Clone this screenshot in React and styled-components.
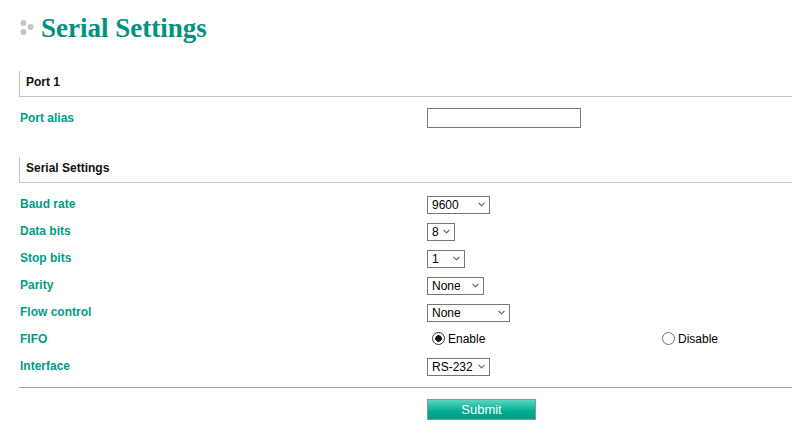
import React from "react";
import styled, { createGlobalStyle } from "styled-components";
import { ChevronDown } from "lucide-react";

const GlobalStyle = createGlobalStyle`
  body {
    margin: 0;
    background: #fff;
    font-family: "Liberation Sans", Arial, sans-serif;
  }
`;

const Page = styled.div`
  padding: 0 0 0 19px;
`;

const Header = styled.div`
  display: flex;
  align-items: center;
  margin-top: 10px;
  height: 36px;
`;

const Title = styled.h1`
  margin: 0 0 0 6px;
  font-family: "Liberation Serif", "Times New Roman", serif;
  font-size: 27px;
  font-weight: bold;
  line-height: 36px;
  color: #00927d;
`;

const SectionHead = styled.div`
  box-sizing: border-box;
  height: 26px;
  margin-top: ${(p) => p.$top}px;
  padding: 4px 0 0 6px;
  border-left: 1px solid #c4c4c4;
  border-bottom: 1px solid #c4c4c4;
  font-size: 12px;
  line-height: 14px;
  font-weight: bold;
  color: #111;
`;

const Rows = styled.div`
  padding-top: 7px;
`;

const Row = styled.div`
  display: grid;
  grid-template-columns: 408px 230px 1fr;
  align-items: center;
  height: 27px;
`;

const Label = styled.div`
  padding-left: 1px;
  font-size: 12px;
  font-weight: bold;
  color: #009c87;
`;

const TextInput = styled.input`
  box-sizing: border-box;
  width: 154px;
  height: 20px;
  margin: 0;
  border: 1px solid #767676;
  border-radius: 0;
  font-size: 12px;
`;

const SelectWrap = styled.span`
  position: relative;
  display: inline-block;
  width: ${(p) => p.$w}px;
  height: 18px;
`;

const Select = styled.select`
  appearance: none;
  box-sizing: border-box;
  width: 100%;
  height: 18px;
  margin: 0;
  padding: 0 0 0 4px;
  border: 1px solid #767676;
  border-radius: 0;
  background: #fff;
  font-family: "Liberation Sans", Arial, sans-serif;
  font-size: 12px;
  color: #000;
`;

const Chevron = styled(ChevronDown)`
  position: absolute;
  right: 3px;
  top: 4px;
  width: 11px;
  height: 11px;
  color: #5e5e5e;
  pointer-events: none;
`;

const RadioLabel = styled.label`
  display: inline-flex;
  align-items: center;
  font-size: 12px;
  color: #000;
`;

const Radio = styled.input`
  appearance: none;
  box-sizing: border-box;
  margin: 0 3px 0 5px;
  width: 13px;
  height: 13px;
  border: 1px solid #6f6f6f;
  border-radius: 50%;
  background: #fff;

  &:checked {
    border-color: #333;
    background: radial-gradient(circle, #111 0 3px, #fff 3.5px);
  }
`;

const Rule = styled.hr`
  margin: 8px 0 0;
  border: 0;
  border-top: 1px solid #a4a4a4;
`;

const ButtonRow = styled.div`
  padding: 11px 0 0 408px;
`;

const SubmitButton = styled.button`
  box-sizing: border-box;
  width: 109px;
  height: 21px;
  padding: 0;
  border: 1px solid #7d9c96;
  background: linear-gradient(#5ad6bf 0%, #1bbca0 40%, #02ab8f 60%, #00a084 100%);
  color: #fff;
  font-family: "Liberation Sans", Arial, sans-serif;
  font-size: 13px;
`;

const Dots = () => (
  <svg width="16" height="20" viewBox="0 0 16 20">
    <circle cx="4.5" cy="5" r="3" fill="#c6c6c6" />
    <circle cx="11.5" cy="9" r="3" fill="#c6c6c6" />
    <circle cx="4.5" cy="14" r="3" fill="#c6c6c6" />
  </svg>
);

const Dropdown = ({ w, value, options }) => (
  <SelectWrap $w={w}>
    <Select defaultValue={value}>
      {options.map((o) => (
        <option key={o}>{o}</option>
      ))}
    </Select>
    <Chevron strokeWidth={2.2} />
  </SelectWrap>
);

const fields = [
  { label: "Baud rate", w: 63, value: "9600", options: ["300", "1200", "2400", "4800", "9600", "19200", "38400", "57600", "115200"] },
  { label: "Data bits", w: 28, value: "8", options: ["5", "6", "7", "8"] },
  { label: "Stop bits", w: 38, value: "1", options: ["1", "1.5", "2"] },
  { label: "Parity", w: 57, value: "None", options: ["None", "Odd", "Even", "Mark", "Space"] },
  { label: "Flow control", w: 83, value: "None", options: ["None", "RTS/CTS", "XON/XOFF"] },
];

export default function App() {
  return (
    <Page>
      <GlobalStyle />
      <Header>
        <Dots />
        <Title>Serial Settings</Title>
      </Header>

      <SectionHead $top={25}>Port 1</SectionHead>
      <Rows>
        <Row>
          <Label>Port alias</Label>
          <div>
            <TextInput type="text" />
          </div>
        </Row>
      </Rows>

      <SectionHead $top={26}>Serial Settings</SectionHead>
      <Rows>
        {fields.map((f) => (
          <Row key={f.label}>
            <Label>{f.label}</Label>
            <div>
              <Dropdown w={f.w} value={f.value} options={f.options} />
            </div>
          </Row>
        ))}
        <Row>
          <Label>FIFO</Label>
          <RadioLabel>
            <Radio type="radio" name="fifo" defaultChecked />
            Enable
          </RadioLabel>
          <RadioLabel>
            <Radio type="radio" name="fifo" />
            Disable
          </RadioLabel>
        </Row>
        <Row>
          <Label>Interface</Label>
          <div>
            <Dropdown w={63} value="RS-232" options={["RS-232", "RS-422", "RS-485 2-wire", "RS-485 4-wire"]} />
          </div>
        </Row>
      </Rows>

      <Rule />
      <ButtonRow>
        <SubmitButton type="button">Submit</SubmitButton>
      </ButtonRow>
    </Page>
  );
}
